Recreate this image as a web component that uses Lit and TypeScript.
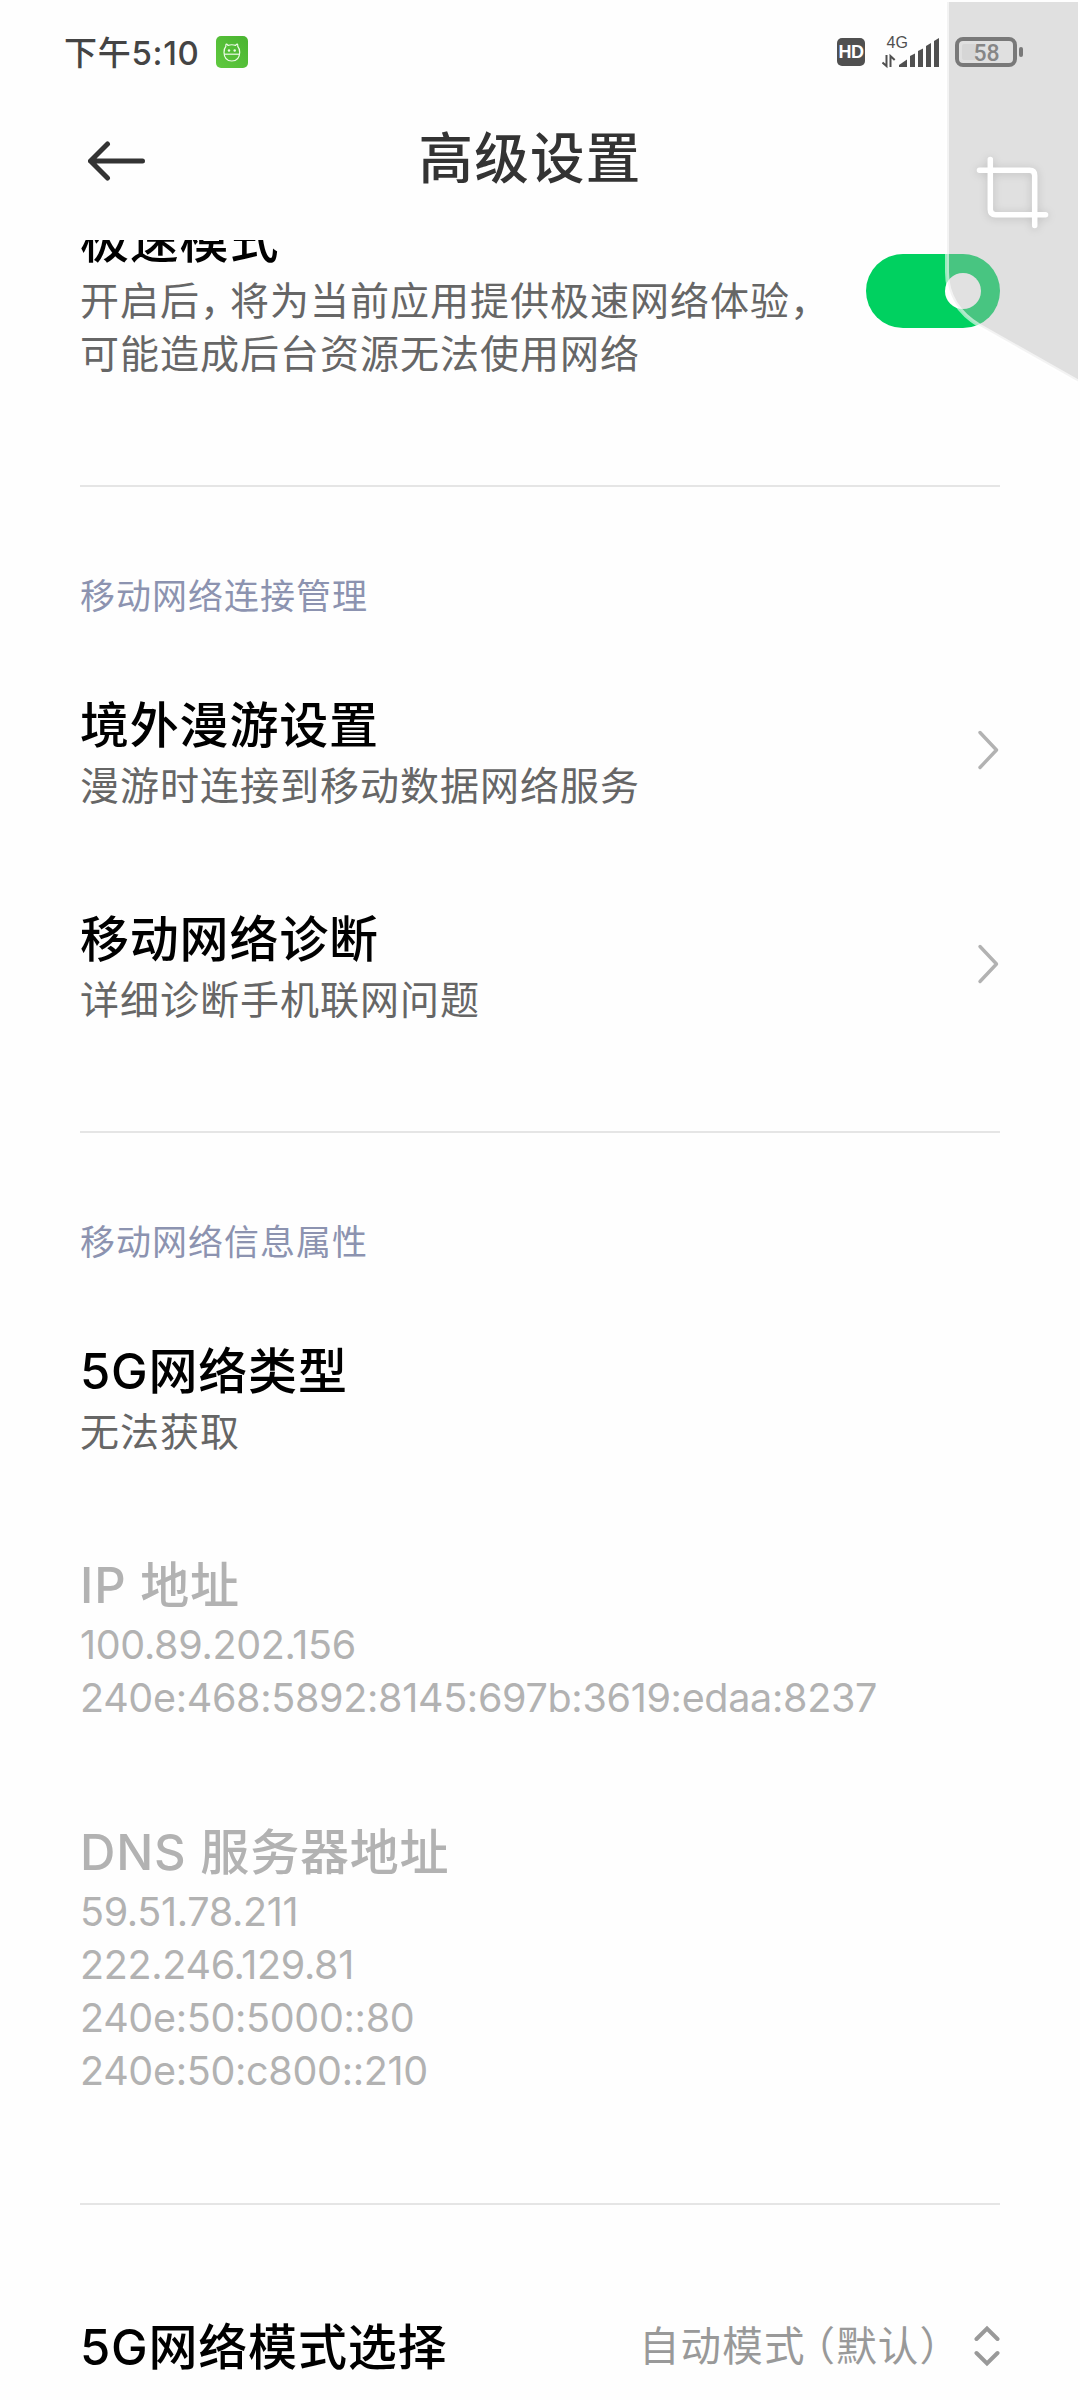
import { LitElement, html, css, svg, nothing } from "lit";
import { customElement, property } from "lit/decorators.js";

interface Setting {
  title: string;
  lines: string[];
  numeric?: boolean;
  disabled?: boolean;
  link?: boolean;
  toggle?: boolean;
}

interface Section {
  heading?: string;
  items: Setting[];
}

const SECTIONS: Section[] = [
  {
    items: [
      {
        title: "极速模式",
        lines: ["开启后，将为当前应用提供极速网络体验，", "可能造成后台资源无法使用网络"],
        toggle: true,
      },
    ],
  },
  {
    heading: "移动网络连接管理",
    items: [
      { title: "境外漫游设置", lines: ["漫游时连接到移动数据网络服务"], link: true },
      { title: "移动网络诊断", lines: ["详细诊断手机联网问题"], link: true },
    ],
  },
  {
    heading: "移动网络信息属性",
    items: [
      { title: "5G网络类型", lines: ["无法获取"] },
      {
        title: "IP 地址",
        lines: ["100.89.202.156", "240e:468:5892:8145:697b:3619:edaa:8237"],
        numeric: true,
        disabled: true,
      },
      {
        title: "DNS 服务器地址",
        lines: ["59.51.78.211", "222.246.129.81", "240e:50:5000::80", "240e:50:c800::210"],
        numeric: true,
        disabled: true,
      },
    ],
  },
];

const tightenCommas = (line: string) =>
  line.split(/(，)/).map((part) => (part === "，" ? html`<span class="comma">，</span>` : part));

@customElement("status-bar")
export class StatusBar extends LitElement {
  static styles = css`
    :host { display: flex; align-items: center; height: 104px; padding: 0 57px 0 64px; box-sizing: border-box; color: #444; }
    .time { width: 133px; padding-top: 2px; font-family: Inter, "Noto Sans CJK SC", sans-serif; font-size: 33px; font-weight: 500; letter-spacing: 0.7px; line-height: 40px; white-space: nowrap; }
    .app { width: 32px; height: 32px; margin-left: 19px; }
    .spacer { flex: 1; }
    .hd { width: 28px; height: 28px; border-radius: 5px; background: #505050; color: #fff; font: 700 18px/29px "Liberation Sans", sans-serif; text-align: center; letter-spacing: -0.5px; }
    .signal { width: 58px; height: 34px; margin-left: 17px; }
    .gtext { font: 16px "Liberation Sans", sans-serif; fill: #505050; }
    .battery { width: 68px; height: 30px; margin-left: 15px; }
    .level { font: 500 23px Roboto, sans-serif; fill: #686868; }
  `;

  render() {
    return html`
      <span class="time">下午5:10</span>
      <svg class="app" viewBox="0 0 32 32">
        <defs>
          <linearGradient id="g" x1="0" y1="1" x2="1" y2="0">
            <stop offset="0" stop-color="#60c940" /><stop offset="1" stop-color="#49b430" />
          </linearGradient>
        </defs>
        <rect width="32" height="32" rx="5" fill="url(#g)" />
        <g fill="none" stroke="#eefbe9" stroke-width="1.2">
          <path d="M12 9.3Q9.6 6.4 9.8 10.5Q8 12.5 8 16.5Q8.3 25 15.8 25Q23.4 25 23.7 16.5Q23.7 12.5 21.8 10.5Q22 6.4 19.6 9.3Q15.8 8.2 12 9.3Z" />
          <path d="M8 18.2H23.7" />
        </g>
        <circle cx="13" cy="14.5" r="1.2" fill="#eefbe9" /><circle cx="18.7" cy="14.5" r="1.2" fill="#eefbe9" />
      </svg>
      <span class="spacer"></span>
      <span class="hd">HD</span>
      <svg class="signal" viewBox="882 34 58 34">
        <text class="gtext" x="886.5" y="47">4G</text>
        <g fill="none" stroke="#505050" stroke-width="2">
          <path d="M886.5 54V65L882.5 61.5" /><path d="M890.5 66V55L894.7 59" />
        </g>
        <g fill="#505050">
          <path d="M899 66V64L907 58.5V66Z" />
          <path d="M910 66V55L915 52.5V66Z" />
          <path d="M918 66V50L923 47.5V66Z" />
          <path d="M926 66V45L931 42V66Z" />
          <path d="M934 66V40L939 37V66Z" />
        </g>
      </svg>
      <svg class="battery" viewBox="955 37 68 30">
        <rect x="962" y="44" width="14" height="16" rx="2" fill="#ededed" />
        <rect x="957" y="39" width="58" height="26" rx="6" fill="none" stroke="#535353" stroke-width="4" />
        <rect x="1019" y="47" width="4" height="10" rx="2" fill="#535353" />
        <text class="level" x="973.5" y="60.5">58</text>
      </svg>
    `;
  }
}

@customElement("setting-row")
export class SettingRow extends LitElement {
  @property({ attribute: false }) item!: Setting;

  static styles = css`
    :host { display: block; }
    .row { display: flex; align-items: center; justify-content: space-between; padding: 48px 0 47px; }
    .title { font-family: Inter, "Noto Sans CJK SC", sans-serif; font-size: 49px; line-height: 66px; font-weight: 500; letter-spacing: 0.8px; color: #000; white-space: pre; }
    .line { font-size: 39px; line-height: 53px; letter-spacing: 1px; color: #666; white-space: nowrap; }
    .numeric { font-family: Inter, sans-serif; font-size: 39.5px; letter-spacing: -0.32px; }
    .comma { letter-spacing: -9px; }
    .disabled .title, .disabled .line { color: #b2b2b2; }
    .chevron { width: 24px; height: 42px; margin-bottom: 5px; }
    .switch { display: flex; align-items: center; justify-content: flex-end; box-sizing: border-box; width: 134px; height: 74px; margin-bottom: 7px; padding-right: 19px; border-radius: 37px; background: #00d160; }
    .knob { width: 36px; height: 36px; border-radius: 50%; background: #fff; }
  `;

  render() {
    const { title, lines, numeric, disabled, link, toggle } = this.item;
    return html`
      <div class="row ${disabled ? "disabled" : ""}">
        <div>
          <div class="title">${title}</div>
          ${lines.map((l) => html`<div class="line ${numeric ? "numeric" : ""}">${numeric ? l : tightenCommas(l)}</div>`)}
        </div>
        ${link
          ? html`<svg class="chevron" viewBox="0 0 24 42"><path d="M4 3.5L20.5 21L4 38.5" fill="none" stroke="#b2b2b2" stroke-width="3.4" stroke-linecap="round" stroke-linejoin="round" /></svg>`
          : nothing}
        ${toggle ? html`<div class="switch"><div class="knob"></div></div>` : nothing}
      </div>
    `;
  }
}

@customElement("app-root")
export class AppRoot extends LitElement {
  static styles = css`
    :host { display: block; position: relative; width: 1080px; height: 2400px; overflow: hidden; background: #fefefe; font-family: Lato, "Noto Sans CJK SC", sans-serif; }
    .header { display: flex; align-items: center; height: 136px; padding-left: 88px; box-sizing: border-box; }
    .back { width: 57px; height: 44px; margin-top: -23px; }
    .heading { flex: 1; margin: -30px 165px 0 0; text-align: center; font-size: 54.5px; line-height: 70px; font-weight: 500; letter-spacing: 1.3px; color: #333; }
    .scroll { height: 2160px; overflow: hidden; padding: 0 80px; }
    .list { margin-top: -80px; }
    .section { padding-bottom: 58px; border-bottom: 2px solid #e5e5e5; }
    .category { padding: 90px 0 32px; font-size: 35px; line-height: 36px; letter-spacing: 1px; color: #8c93b0; }
    .mode { display: flex; align-items: center; height: 160px; margin-top: 62px; }
    .modetitle { flex: 1; padding-top: 2px; font-family: Inter, "Noto Sans CJK SC", sans-serif; font-size: 49px; line-height: 66px; font-weight: 500; letter-spacing: 0.8px; color: #000; }
    .value { margin-top: -2px; font-size: 40.5px; line-height: 56px; letter-spacing: 1.2px; color: #999; white-space: nowrap; }
    .open, .close { font-feature-settings: "halt"; }
    .open { margin-left: 9px; }
    .updown { width: 26px; height: 42px; margin: -3px 0 0 33px; }
    .handle { position: absolute; left: 0; top: 0; width: 1080px; height: 400px; pointer-events: none; }
    .crop { filter: drop-shadow(0 1px 4px rgba(0, 0, 0, 0.15)); }
  `;

  private overlay() {
    return svg`
      <path d="M1078 2H947V272C947 297 960 314 980 326L1078 381.5Z" fill="rgba(181,181,181,.4)" />
      <path d="M947 2V272C947 297 960 314 980 326L1078 381.5" fill="none" stroke="#fff" stroke-opacity=".6" stroke-width="4" />
      <g class="crop" fill="none" stroke="#fff" stroke-width="5.5" stroke-linecap="round">
        <path d="M990.3 159.5V209.5Q990.3 214.7 995.5 214.7H1045.5" />
        <path d="M979.5 170.3H1029.5Q1034.7 170.3 1034.7 175.5V225.5" />
      </g>
    `;
  }

  render() {
    return html`
      <status-bar></status-bar>
      <div class="header">
        <svg class="back" viewBox="0 0 57 44"><path d="M19.5 5L2.5 22L19.5 39M2.5 22H54.5" fill="none" stroke="#333" stroke-width="5" stroke-linecap="round" stroke-linejoin="round" /></svg>
        <div class="heading">高级设置</div>
      </div>
      <div class="scroll">
        <div class="list">
          ${SECTIONS.map(
            (s) => html`<div class="section">
              ${s.heading ? html`<div class="category">${s.heading}</div>` : nothing}
              ${s.items.map((i) => html`<setting-row .item=${i}></setting-row>`)}
            </div>`
          )}
          <div class="mode">
            <div class="modetitle">5G网络模式选择</div>
            <div class="value">自动模式<span class="open">（</span>默认<span class="close">）</span></div>
            <svg class="updown" viewBox="0 0 26 42"><path d="M2.5 14L13 3.5L23.5 14M2.5 28L13 38.5L23.5 28" fill="none" stroke="#999" stroke-width="4" stroke-linecap="round" /></svg>
          </div>
        </div>
      </div>
      <svg class="handle" viewBox="0 0 1080 400">${this.overlay()}</svg>
    `;
  }
}
